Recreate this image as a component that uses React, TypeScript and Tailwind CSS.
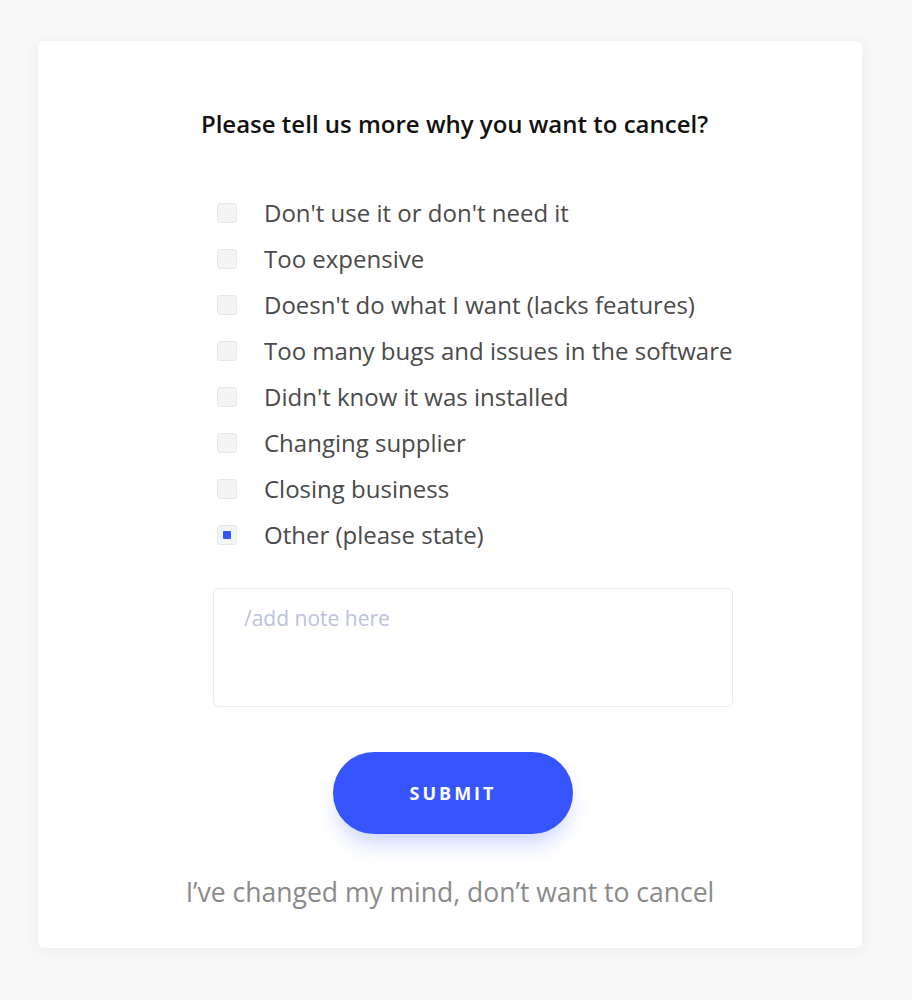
import React from "react";

const options = [
  "Don't use it or don't need it",
  "Too expensive",
  "Doesn't do what I want (lacks features)",
  "Too many bugs and issues in the software",
  "Didn't know it was installed",
  "Changing supplier",
  "Closing business",
  "Other (please state)",
];

export default function App() {
  return (
    <div className="min-h-[1000px] w-full bg-[#f8f8f8] pt-[41px] pl-[38px] font-['Open_Sans',sans-serif]">
      <div className="w-[824px] h-[907px] bg-white rounded-[6px] shadow-[0_2px_14px_rgba(0,0,0,0.06)] flex flex-col pt-[69px]">
        <h1 className="pl-[9px] text-center text-[24px] leading-[28px] font-semibold text-[#111111] whitespace-nowrap">
          Please tell us more why you want to cancel?
        </h1>
        <div className="ml-[175px] w-[520px] mt-[52px] flex flex-col">
          {options.map((o, i) => (
            <div key={o} className="h-[46px] flex items-center">
              <div className="ml-[4px] w-[20px] h-[20px] rounded-[3px] bg-[#f3f4f5] border border-[#e6e7e8] flex items-center justify-center">
                {i === options.length - 1 && (
                  <div className="w-[8px] h-[8px] rounded-[1px] bg-[#3755fe]" />
                )}
              </div>
              <span className="ml-[27px] text-[24px] leading-[30px] text-[#4a4a4a] whitespace-nowrap">{o}</span>
            </div>
          ))}
          <textarea
            placeholder="/add note here"
            className="mt-[30px] w-[520px] h-[119px] resize-none rounded-[6px] border border-[#e6e9f6] pl-[30px] pt-[16px] text-[21px] leading-[26px] text-[#4a4a4a] placeholder:text-[#bcc1dd] outline-none"
          />
        </div>
        <div className="mt-[45px] flex justify-center pl-[6px]">
          <button className="w-[240px] h-[82px] rounded-full bg-[#3755fe] text-white text-[18px] font-bold tracking-[3px] shadow-[0_14px_22px_-6px_rgba(55,85,254,0.28)]">
            SUBMIT
          </button>
        </div>
        <div className="mt-[43px] text-center text-[26.5px] leading-[30px] text-[#8a8a8a] whitespace-nowrap">
          I’ve changed my mind, don’t want to cancel
        </div>
      </div>
    </div>
  );
}
